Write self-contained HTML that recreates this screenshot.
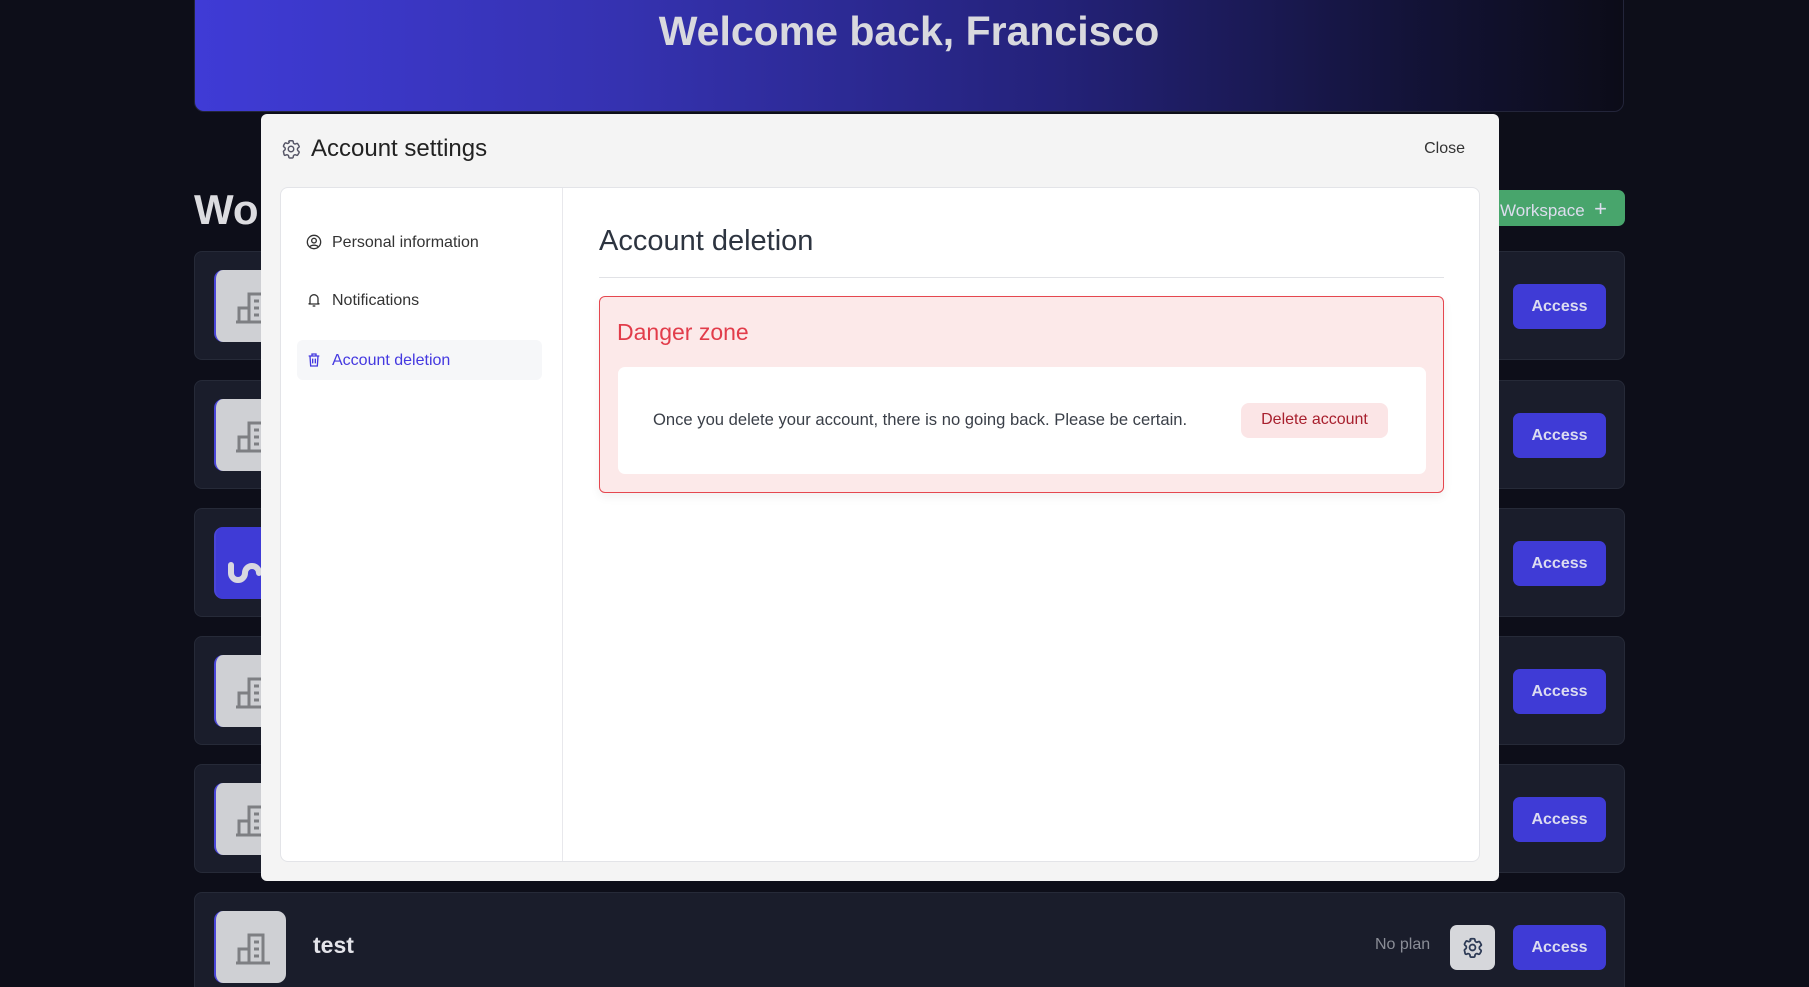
<!DOCTYPE html>
<html><head><meta charset="utf-8">
<style>
*{box-sizing:border-box;margin:0;padding:0}
html,body{width:1809px;height:987px;overflow:hidden;background:#0d0e19;font-family:"Liberation Sans",sans-serif;position:relative}
.banner{position:absolute;left:194px;top:-10px;width:1430px;height:122px;border-radius:10px;border:1px solid #23253a;
background:linear-gradient(90deg,#3f3bd6 0%,#3532b0 30%,#24227a 60%,#131338 85%,#0c0c18 100%)}
.banner h1{position:absolute;left:0;right:0;top:17px;text-align:center;color:#d9d9de;font-size:41px;font-weight:bold}
.wo{position:absolute;left:194px;top:186px;color:#dcdce0;font-size:42px;font-weight:bold}
.green{position:absolute;left:1440px;top:190px;width:185px;height:36px;background:#48a56c;border-radius:7px;color:#dde;font-size:17px;padding:6px 0 0 60px}
.card{position:absolute;left:194px;width:1431px;height:109px;background:#1a1d2b;border:1px solid #262a38;border-radius:8px}
.tile{position:absolute;left:19px;top:18px;width:72px;height:72px;border-radius:9px;background:#cfd0d4;border-left:2px solid #4a46d8}
.tile svg{position:absolute;left:0;top:0}
.acc{position:absolute;left:1318px;top:32px;width:93px;height:45px;background:#3f3bd6;border-radius:7px;color:#dcdcf0;font-size:16px;font-weight:bold;text-align:center;line-height:45px}
.modal{position:absolute;left:261px;top:114px;width:1238px;height:767px;background:#f4f4f4;border-radius:6px}
.mh{position:absolute;left:50px;top:21px;font-size:24px;color:#222}
.close{position:absolute;right:34px;top:26px;font-size:16px;color:#333}
.inner{position:absolute;left:19px;top:73px;width:1200px;height:675px;background:#fff;border:1px solid #e3e4e8;border-radius:8px}
.side{position:absolute;left:0;top:0;width:282px;height:100%;border-right:1px solid #e8e8ec}
.mi{position:absolute;left:16px;width:245px;height:40px;font-size:16px;color:#333;padding:12px 0 0 35px;border-radius:6px}
.mi svg{position:absolute;left:9px;top:12px}
.act{background:#f6f7f9;color:#4438e0}
.h2{position:absolute;left:318px;top:37px;font-size:29px;color:#2d3440}
.hr{position:absolute;left:318px;top:89px;width:845px;height:1px;background:#e1e2e6}
.dz{position:absolute;left:318px;top:108px;width:845px;height:197px;background:#fce9e9;border:1px solid #e5474f;border-radius:6px;box-shadow:0 4px 10px rgba(0,0,0,.06)}
.dz h3{position:absolute;left:17px;top:22px;font-size:23px;font-weight:normal;color:#e23c4a}
.wb{position:absolute;left:18px;top:70px;width:808px;height:107px;background:#fff;border-radius:7px}
.wb p{position:absolute;left:35px;top:43px;font-size:16.6px;color:#3a3f48}
.del{position:absolute;left:623px;top:36px;width:147px;height:35px;background:#fbe5e6;border-radius:8px;color:#a8202e;font-size:16px;text-align:center;line-height:34px}
</style></head><body>
<div class="banner"><h1>Welcome back, Francisco</h1></div>
<div class="wo">Wo</div>
<div class="green">Workspace&nbsp; <span style="font-size:22px">+</span></div>

<div class="card" style="top:251px"><div class="tile"><svg width="72" height="72" fill="none" stroke="#7e7f83" stroke-width="3"><path d="M20 52h34M23 52V38h10v14M33 52V24h14v28"/><path d="M38 31h5M38 38h5M38 45h5"/></svg></div><div class="acc">Access</div></div>
<div class="card" style="top:380px"><div class="tile"><svg width="72" height="72" fill="none" stroke="#7e7f83" stroke-width="3"><path d="M20 52h34M23 52V38h10v14M33 52V24h14v28"/><path d="M38 31h5M38 38h5M38 45h5"/></svg></div><div class="acc">Access</div></div>
<div class="card" style="top:508px"><div class="tile" style="background:#3f3bd6"><svg width="72" height="72"><path d="M15 38 v8 a7 7 0 0 0 14 0 a7 7 0 0 1 14 0" stroke="#d8d8e0" stroke-width="6" fill="none" stroke-linecap="round"/></svg></div><div class="acc">Access</div></div>
<div class="card" style="top:636px"><div class="tile"><svg width="72" height="72" fill="none" stroke="#7e7f83" stroke-width="3"><path d="M20 52h34M23 52V38h10v14M33 52V24h14v28"/><path d="M38 31h5M38 38h5M38 45h5"/></svg></div><div class="acc">Access</div></div>
<div class="card" style="top:764px"><div class="tile"><svg width="72" height="72" fill="none" stroke="#7e7f83" stroke-width="3"><path d="M20 52h34M23 52V38h10v14M33 52V24h14v28"/><path d="M38 31h5M38 38h5M38 45h5"/></svg></div><div class="acc">Access</div></div>
<div class="card" style="top:892px">
 <div class="tile"><svg width="72" height="72" fill="none" stroke="#7e7f83" stroke-width="3"><path d="M20 52h34M23 52V38h10v14M33 52V24h14v28"/><path d="M38 31h5M38 38h5M38 45h5"/></svg></div>
 <div style="position:absolute;left:118px;top:39px;font-size:23px;font-weight:bold;color:#e4e4ea">test</div>
 <div style="position:absolute;left:1180px;top:43px;font-size:16px;color:#8a8d96">No plan</div>
 <div style="position:absolute;left:1255px;top:32px;width:45px;height:45px;background:#d6d7db;border-radius:7px"><svg width="45" height="45" viewBox="-11 -11 46 46" fill="none" stroke="#2d3a55" stroke-width="1.8"><path d="M9.6 3.9c.1-.5.6-.9 1.1-.9h2.6c.5 0 1 .4 1.1.9l.2 1.3c.1.4.4.7.7.9l.4.3c.4.2.8.2 1.2.1l1.2-.5c.5-.2 1.1 0 1.4.5l1.3 2.3c.3.5.2 1.1-.3 1.4l-1 .8c-.3.3-.5.7-.5 1.1v.6c0 .4.2.8.5 1.1l1 .8c.4.4.5 1 .3 1.4l-1.3 2.3c-.3.5-.9.7-1.4.5l-1.2-.5c-.4-.1-.8-.1-1.2.1l-.4.3c-.3.2-.6.5-.7.9l-.2 1.3c-.1.5-.6.9-1.1.9h-2.6c-.5 0-1-.4-1.1-.9l-.2-1.3c-.1-.4-.4-.7-.7-.9l-.4-.3c-.4-.2-.8-.2-1.2-.1l-1.2.5c-.5.2-1.1 0-1.4-.5L3.9 15.4c-.3-.5-.2-1.1.3-1.4l1-.8c.3-.3.5-.7.5-1.1v-.6c0-.4-.2-.8-.5-1.1l-1-.8c-.4-.4-.5-1-.3-1.4l1.3-2.3c.3-.5.9-.7 1.4-.5l1.2.5c.4.1.8.1 1.2-.1l.4-.3c.3-.2.6-.5.7-.9z"/><circle cx="12" cy="12" r="3"/></svg></div>
 <div class="acc" style="top:32px">Access</div>
</div>

<div class="modal">
 <svg style="position:absolute;left:19px;top:24px" width="22" height="22" viewBox="0 0 24 24" fill="none" stroke="#556" stroke-width="1.6"><path d="M9.6 3.9c.1-.5.6-.9 1.1-.9h2.6c.5 0 1 .4 1.1.9l.2 1.3c.1.4.4.7.7.9l.4.3c.4.2.8.2 1.2.1l1.2-.5c.5-.2 1.1 0 1.4.5l1.3 2.3c.3.5.2 1.1-.3 1.4l-1 .8c-.3.3-.5.7-.5 1.1v.6c0 .4.2.8.5 1.1l1 .8c.4.4.5 1 .3 1.4l-1.3 2.3c-.3.5-.9.7-1.4.5l-1.2-.5c-.4-.1-.8-.1-1.2.1l-.4.3c-.3.2-.6.5-.7.9l-.2 1.3c-.1.5-.6.9-1.1.9h-2.6c-.5 0-1-.4-1.1-.9l-.2-1.3c-.1-.4-.4-.7-.7-.9l-.4-.3c-.4-.2-.8-.2-1.2-.1l-1.2.5c-.5.2-1.1 0-1.4-.5L3.9 15.4c-.3-.5-.2-1.1.3-1.4l1-.8c.3-.3.5-.7.5-1.1v-.6c0-.4-.2-.8-.5-1.1l-1-.8c-.4-.4-.5-1-.3-1.4l1.3-2.3c.3-.5.9-.7 1.4-.5l1.2.5c.4.1.8.1 1.2-.1l.4-.3c.3-.2.6-.5.7-.9z"/><circle cx="12" cy="12" r="3"/></svg>
 <div class="mh">Account settings</div>
 <div class="close">Close</div>
 <div class="inner">
  <div class="side">
   <div class="mi" style="top:34px"><svg width="16" height="16" viewBox="0 0 24 24" fill="none" stroke="#333" stroke-width="2"><circle cx="12" cy="12" r="10"/><circle cx="12" cy="10" r="3.5"/><path d="M6 19c2-3 10-3 12 0"/></svg>Personal information</div>
   <div class="mi" style="top:92px"><svg width="16" height="16" viewBox="0 0 24 24" fill="none" stroke="#333" stroke-width="2"><path d="M6 17V10a6 6 0 0 1 12 0v7l2 1H4z"/><path d="M10 21h4"/></svg>Notifications</div>
   <div class="mi act" style="top:152px"><svg width="16" height="16" viewBox="0 0 24 24" fill="none" stroke="#4438e0" stroke-width="2"><path d="M4 6h16M9 6V3h6v3M6 6l1 15h10l1-15M10 10v7M14 10v7"/></svg>Account deletion</div>
  </div>
  <div class="h2">Account deletion</div>
  <div class="hr"></div>
  <div class="dz"><h3>Danger zone</h3>
   <div class="wb"><p>Once you delete your account, there is no going back. Please be certain.</p><div class="del">Delete account</div></div>
  </div>
 </div>
</div>
</body></html>
